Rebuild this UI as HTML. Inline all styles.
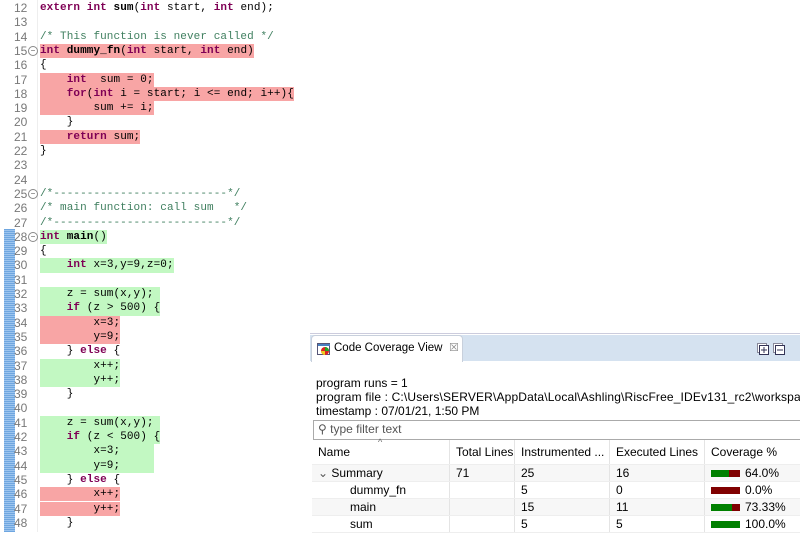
<!DOCTYPE html>
<html><head><meta charset="utf-8"><style>
body{margin:0;width:800px;height:532px;overflow:hidden;background:#fff;position:relative;font-family:"Liberation Mono",monospace;}
.ln{position:absolute;left:14px;font:12px/14.3px "Liberation Sans",sans-serif;color:#787878;height:14.3px}
.c{position:absolute;left:40px;font-size:11px;letter-spacing:0.08px;line-height:14.3px;height:14.3px;white-space:pre;color:#000}
.r{background:#f8a5a5}.g{background:#c2f8c2}
b{color:#7f0055}
s{text-decoration:none;font-weight:bold}
.cm{color:#3f7f5f}
.fold{position:absolute;left:28px;width:8px;height:8px;border:1px solid #888;border-radius:50%;font:8px/8px sans-serif;color:#555;text-align:center}
#ruler{position:absolute;left:4px;top:229px;width:11px;height:303px;background:repeating-linear-gradient(#6ea6e0 0 1px,#9cc4ee 1px 2px)}
#panel{position:absolute;left:310px;top:333px;width:490px;height:199px;overflow:hidden;background:#fff;border-top:1px solid #ccd;font:12px "Liberation Sans",sans-serif;color:#000}
#tabbar{position:absolute;left:0;top:1px;width:490px;height:26px;background:#d5e2f0}
#tab{position:absolute;left:1px;top:1px;width:150px;height:26px;background:#fff;border-radius:4px 4px 0 0;border:1px solid #c8d0dc;border-bottom:none}
.t{position:absolute;white-space:nowrap}
td{padding:0 0 0 6px;height:16px;border-right:1px solid #e4e4e4;border-bottom:1px solid #eee;white-space:nowrap}
table{position:absolute;left:2px;top:106px;border-collapse:collapse;font:12px "Liberation Sans",sans-serif;width:490px}
.bar{display:inline-block;width:29px;height:7px;vertical-align:middle;margin-right:5px;background:#800000}
.bar i{display:block;height:7px;background:#008000}
</style></head><body>
<div id="ruler"></div>
<div style="position:absolute;left:37px;top:0;width:1px;height:532px;background:#eee"></div>

<div class="ln" style="top:1px">12</div><div class="c" style="top:1px"><b>extern</b> <b>int</b> <s>sum</s>(<b>int</b> start, <b>int</b> end);</div>
<div class="ln" style="top:15.3px">13</div>
<div class="ln" style="top:29.6px">14</div><div class="c cm" style="top:29.6px">/* This function is never called */</div>
<div class="ln" style="top:43.9px">15</div><div class="fold" style="top:46px">−</div><div class="c r" style="top:43.9px"><b>int</b> <s>dummy_fn</s>(<b>int</b> start, <b>int</b> end)</div>
<div class="ln" style="top:58.2px">16</div><div class="c" style="top:58.2px">{</div>
<div class="ln" style="top:72.5px">17</div><div class="c r" style="top:72.5px">    <b>int</b>  sum = 0;</div>
<div class="ln" style="top:86.8px">18</div><div class="c r" style="top:86.8px">    <b>for</b>(<b>int</b> i = start; i &lt;= end; i++){</div>
<div class="ln" style="top:101.1px">19</div><div class="c r" style="top:101.1px">        sum += i;</div>
<div class="ln" style="top:115.4px">20</div><div class="c" style="top:115.4px">    }</div>
<div class="ln" style="top:129.7px">21</div><div class="c r" style="top:129.7px">    <b>return</b> sum;</div>
<div class="ln" style="top:144px">22</div><div class="c" style="top:144px">}</div>
<div class="ln" style="top:158.3px">23</div>
<div class="ln" style="top:172.6px">24</div>
<div class="ln" style="top:186.9px">25</div><div class="fold" style="top:189px">−</div><div class="c cm" style="top:186.9px">/*--------------------------*/</div>
<div class="ln" style="top:201.2px">26</div><div class="c cm" style="top:201.2px">/* main function: call sum   */</div>
<div class="ln" style="top:215.5px">27</div><div class="c cm" style="top:215.5px">/*--------------------------*/</div>
<div class="ln" style="top:229.8px">28</div><div class="fold" style="top:232px">−</div><div class="c g" style="top:229.8px"><b>int</b> <s>main</s>()</div>
<div class="ln" style="top:244.1px">29</div><div class="c" style="top:244.1px">{</div>
<div class="ln" style="top:258.4px">30</div><div class="c g" style="top:258.4px">    <b>int</b> x=3,y=9,z=0;</div>
<div class="ln" style="top:272.7px">31</div>
<div class="ln" style="top:287px">32</div><div class="c g" style="top:287px">    z = sum(x,y); </div>
<div class="ln" style="top:301.3px">33</div><div class="c g" style="top:301.3px">    <b>if</b> (z &gt; 500) {</div>
<div class="ln" style="top:315.6px">34</div><div class="c r" style="top:315.6px">        x=3;</div>
<div class="ln" style="top:329.9px">35</div><div class="c r" style="top:329.9px">        y=9;</div>
<div class="ln" style="top:344.2px">36</div><div class="c" style="top:344.2px">    } <b>else</b> {</div>
<div class="ln" style="top:358.5px">37</div><div class="c g" style="top:358.5px">        x++;</div>
<div class="ln" style="top:372.8px">38</div><div class="c g" style="top:372.8px">        y++;</div>
<div class="ln" style="top:387.1px">39</div><div class="c" style="top:387.1px">    }</div>
<div class="ln" style="top:401.4px">40</div>
<div class="ln" style="top:415.7px">41</div><div class="c g" style="top:415.7px">    z = sum(x,y); </div>
<div class="ln" style="top:430px">42</div><div class="c g" style="top:430px">    <b>if</b> (z &lt; 500) {</div>
<div class="ln" style="top:444.3px">43</div><div class="c g" style="top:444.3px">        x=3;     </div>
<div class="ln" style="top:458.6px">44</div><div class="c g" style="top:458.6px">        y=9;     </div>
<div class="ln" style="top:472.9px">45</div><div class="c" style="top:472.9px">    } <b>else</b> {</div>
<div class="ln" style="top:487.2px">46</div><div class="c r" style="top:487.2px">        x++;</div>
<div class="ln" style="top:501.5px">47</div><div class="c r" style="top:501.5px">        y++;</div>
<div class="ln" style="top:515.8px">48</div><div class="c" style="top:515.8px">    }</div>

<div id="panel">
 <div id="tabbar"></div>
 <div id="tab">
  <svg style="position:absolute;left:5px;top:7px" width="14" height="13"><rect x="0.5" y="0.5" width="12" height="11" fill="#fff" stroke="#557"/><rect x="1" y="1" width="12" height="2" fill="#4a7fc0"/><circle cx="8" cy="8" r="4" fill="#d22"/><path d="M8 8 L8 4 A4 4 0 0 1 12 8Z" fill="#2a2"/><path d="M8 8 L4 8 A4 4 0 0 0 8 12Z" fill="#ec2"/></svg>
  <span class="t" style="left:22px;top:6px;font-size:11.5px">Code Coverage View</span>
  <span class="t" style="left:137px;top:5px;color:#888;font-size:11px">☒</span>
 </div>
 <svg style="position:absolute;left:447px;top:9px" width="30" height="12"><rect x="0.5" y="0.5" width="9" height="9" fill="#fff" stroke="#889"/><rect x="2.5" y="2.5" width="9" height="9" fill="#fff" stroke="#335"/><path d="M4 7h6M7 4v6" stroke="#335"/><rect x="16.5" y="0.5" width="9" height="9" fill="#fff" stroke="#889"/><rect x="18.5" y="2.5" width="9" height="9" fill="#fff" stroke="#335"/><path d="M20 7h6" stroke="#335"/></svg>
 <div class="t" style="left:6px;top:42px">program runs = 1</div>
 <div class="t" style="left:6px;top:56px;letter-spacing:0.15px">program file : C:\Users\SERVER\AppData\Local\Ashling\RiscFree_IDEv131_rc2\workspace\swerv_</div>
 <div class="t" style="left:6px;top:70px">timestamp : 07/01/21, 1:50 PM</div>
 <div style="position:absolute;left:3px;top:86px;width:490px;height:18px;border:1px solid #aaa;"></div>
 <div class="t" style="left:8px;top:88px;color:#555">⚲ type filter text</div>
 <div class="t" style="left:68px;top:103px;font-size:9px;color:#666">^</div>
 <table>
  <tr style="height:24px"><td style="width:131px">Name</td><td style="width:58px">Total Lines</td><td style="width:88px">Instrumented ...</td><td style="width:88px">Executed Lines</td><td style="border-right:none">Coverage %</td></tr>
  <tr style="background:#f7f7f7"><td><span style="color:#555">⌄</span> Summary</td><td>71</td><td>25</td><td>16</td><td style="border-right:none"><span class="bar"><i style="width:18px"></i></span>64.0%</td></tr>
  <tr><td style="padding-left:38px">dummy_fn</td><td></td><td>5</td><td>0</td><td style="border-right:none"><span class="bar"></span>0.0%</td></tr>
  <tr style="background:#f7f7f7"><td style="padding-left:38px">main</td><td></td><td>15</td><td>11</td><td style="border-right:none"><span class="bar"><i style="width:21px"></i></span>73.33%</td></tr>
  <tr><td style="padding-left:38px">sum</td><td></td><td>5</td><td>5</td><td style="border-right:none"><span class="bar"><i style="width:29px"></i></span>100.0%</td></tr>
 </table>
</div>
</body></html>
